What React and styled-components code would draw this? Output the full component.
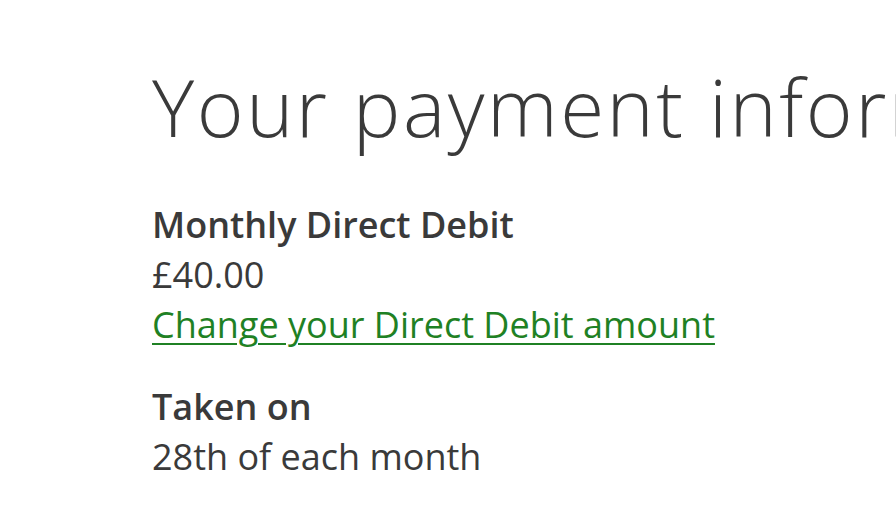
import styled, { createGlobalStyle } from "styled-components";

const GlobalStyle = createGlobalStyle`
  body {
    margin: 0;
    background: #fff;
    font-family: "Open Sans", "Liberation Sans", sans-serif;
    color: #3a3a3a;
  }
`;

const Page = styled.main`
  width: 896px;
  height: 512px;
  overflow: hidden;
  padding: 58px 0 0 152px;
  box-sizing: border-box;
  white-space: nowrap;
`;

const Title = styled.h1`
  margin: 0 0 46px;
  font-family: "Open Sans", sans-serif;
  font-weight: 300;
  font-size: 80px;
  line-height: 96px;
  letter-spacing: 2.5px;
  color: #3a3a3a;
`;

const Group = styled.section`
  display: flex;
  flex-direction: column;
  margin-bottom: 32px;
`;

const Label = styled.div`
  font-size: 36px;
  line-height: 50px;
  font-weight: ${(p) => (p.$bold ? 600 : 400)};
`;

const Link = styled.a`
  font-size: 36px;
  line-height: 50px;
  color: #1f8124;
  text-decoration: underline;
  text-underline-offset: 5px;
  text-decoration-thickness: 2px;
`;

export default function App() {
  return (
    <>
      <GlobalStyle />
      <Page>
        <Title>Your payment information</Title>
        <Group>
          <Label $bold>Monthly Direct Debit</Label>
          <Label>£40.00</Label>
          <Link href="#">Change your Direct Debit amount</Link>
        </Group>
        <Group>
          <Label $bold>Taken on</Label>
          <Label>28th of each month</Label>
        </Group>
      </Page>
    </>
  );
}
